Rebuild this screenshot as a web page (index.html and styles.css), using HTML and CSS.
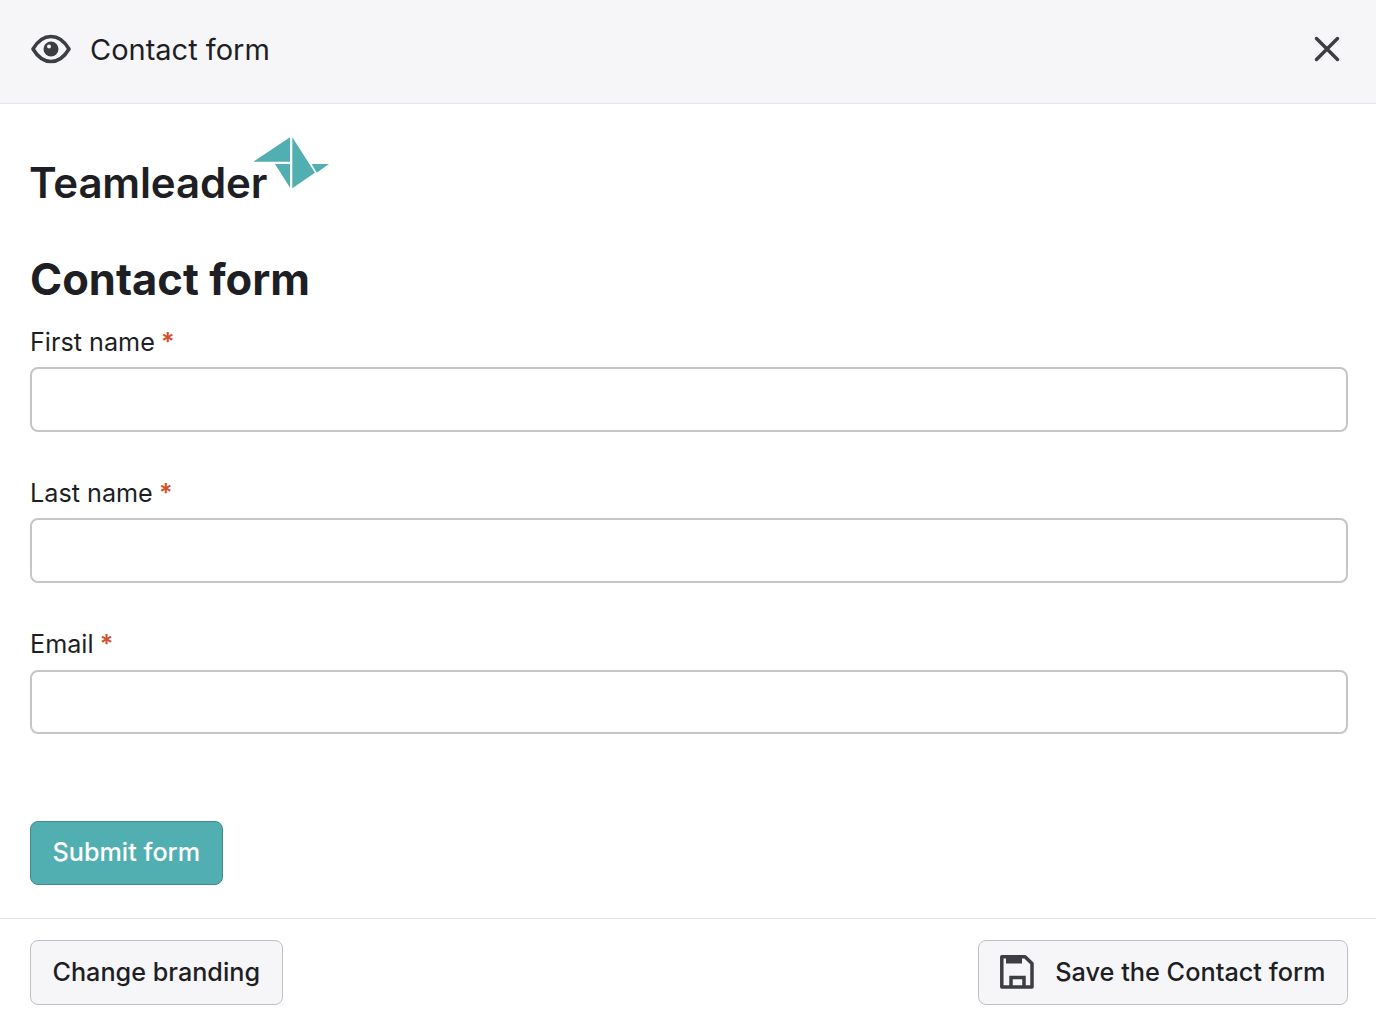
FILE: index.html
```html
<!DOCTYPE html>
<html lang="en">
<head>
    <meta charset="UTF-8">
    <meta name="viewport" content="width=device-width, initial-scale=1.0">
    <title>Contact form</title>
    <link rel="stylesheet" href="styles.css">
</head>
<body>
    <header class="top-bar">
        <div class="top-title">
            <svg class="icon-eye" width="40" height="30" viewBox="0 0 40 30" fill="none">
                <path d="M2 15C7 6.500 13 2.500 20 2.500s13 4 18 12.500c-5 8.500-11 12.500-18 12.500S7 23.500 2 15z" stroke="#3c3e43" stroke-width="3.500" stroke-linejoin="round"/>
                <circle cx="20" cy="15" r="7.500" fill="#3c3e43"/>
                <circle cx="18" cy="12.500" r="2" fill="#f6f6f9"/>
            </svg>
            <span>Contact form</span>
        </div>
        <svg class="icon-close" width="26" height="26" viewBox="0 0 26 26" fill="none">
            <path d="M2.500 2.500l21 21M23.500 2.500l-21 21" stroke="#3c3e43" stroke-width="3.500" stroke-linecap="round"/>
        </svg>
    </header>

    <main class="content">
        <div class="logo">
            <span class="logo-text">Teamleader</span>
            <svg class="logo-mark" width="76" height="52" viewBox="253 137 76 52">
                <path d="M253.300 161.700L290 137.300V161.700z" fill="#52afb1"/>
                <path d="M275 164H290V187.700z" fill="#52afb1"/>
                <path d="M292.300 137.300L315 172.700L292.300 188.300z" fill="#52afb1"/>
                <path d="M311.700 164H329L316.700 172.700z" fill="#52afb1"/>
            </svg>
        </div>

        <h1>Contact form</h1>

        <form class="form">
            <div class="field">
                <label for="fname">First name <span class="req">*</span></label>
                <input type="text" id="fname">
            </div>
            <div class="field">
                <label for="lname">Last name <span class="req">*</span></label>
                <input type="text" id="lname">
            </div>
            <div class="field">
                <label for="email">Email <span class="req">*</span></label>
                <input type="email" id="email">
            </div>
            <button type="button" class="btn btn-submit">Submit form</button>
        </form>
    </main>

    <footer class="bottom-bar">
        <button class="btn btn-light">Change branding</button>
        <button class="btn btn-light btn-save">
            <svg width="34" height="34" viewBox="0 0 34 34" fill="none">
                <path d="M1.800 1.800H25L32 8.500V32H1.800z" stroke="#3c3e43" stroke-width="3.500" stroke-linejoin="round"/>
                <path d="M6 1.800H22V8.500H6z" fill="#3c3e43"/>
                <path d="M11 32V22.500H24V32" stroke="#3c3e43" stroke-width="3.500"/>
            </svg>
            Save the Contact form
        </button>
    </footer>
</body>
</html>
```

FILE: styles.css
```css
* {
    box-sizing: border-box;
}
body {
    margin: 0;
    font-family: Inter, "Liberation Sans", sans-serif;
    color: #1e1f24;
    background: white;
}
.top-bar {
    height: 104px;
    padding: 0 36px 5px 31px;
    display: flex;
    align-items: center;
    justify-content: space-between;
    background: #f6f6f9;
    border-bottom: 1px solid #e4e5e7;
}
.top-title {
    display: flex;
    align-items: center;
    gap: 19px;
    font-size: 29px;
}
.content {
    padding: 0 28px 33px 30px;
}
.logo {
    display: flex;
    align-items: flex-start;
    height: 104px;
    padding-top: 33px;
}
.logo-text {
    margin: 23px 0 0 -1px;
    font-size: 42px;
    line-height: 46px;
    font-weight: 600;
    letter-spacing: -0.15px;
}
.logo-mark {
    margin-left: -14px;
}
h1 {
    margin: 41px 0 0;
    font-size: 43.500px;
    line-height: 60px;
    font-weight: 700;
}
.field {
    margin-bottom: 36.450px;
}
.field:first-child {
    margin-top: 7.520px;
}
label {
    display: block;
    height: 50.200px;
    padding-top: 8px;
    font-size: 25.200px;
    line-height: 34px;
}
.req {
    margin-left: -1px;
    font-weight: 600;
    color: #d4502a;
}
input {
    display: block;
    width: 100%;
    height: 64.800px;
    border: 2px solid #c5c6c9;
    border-radius: 8px;
    background: white;
}
.btn {
    height: 64px;
    padding: 0 21.500px 2px;
    font-family: inherit;
    font-size: 25.200px;
    font-weight: 500;
    border-radius: 8px;
    color: #1e1f24;
}
.btn-submit {
    margin-top: 86.600px;
    display: block;
    color: white;
    background: #52afb1;
    border: 1px solid #3e8a8c;
}
.bottom-bar {
    height: 108px;
    padding: 21px 28px 0 30px;
    display: flex;
    justify-content: space-between;
    align-items: flex-start;
    border-top: 1px solid #e4e5e7;
}
.btn-light {
    height: 65px;
    padding-bottom: 1px;
    background: #f6f6f9;
    border: 1px solid #bfc0c5;
}
.btn-save {
    display: flex;
    align-items: center;
    gap: 21px;
    font-size: 25.300px;
}
```
